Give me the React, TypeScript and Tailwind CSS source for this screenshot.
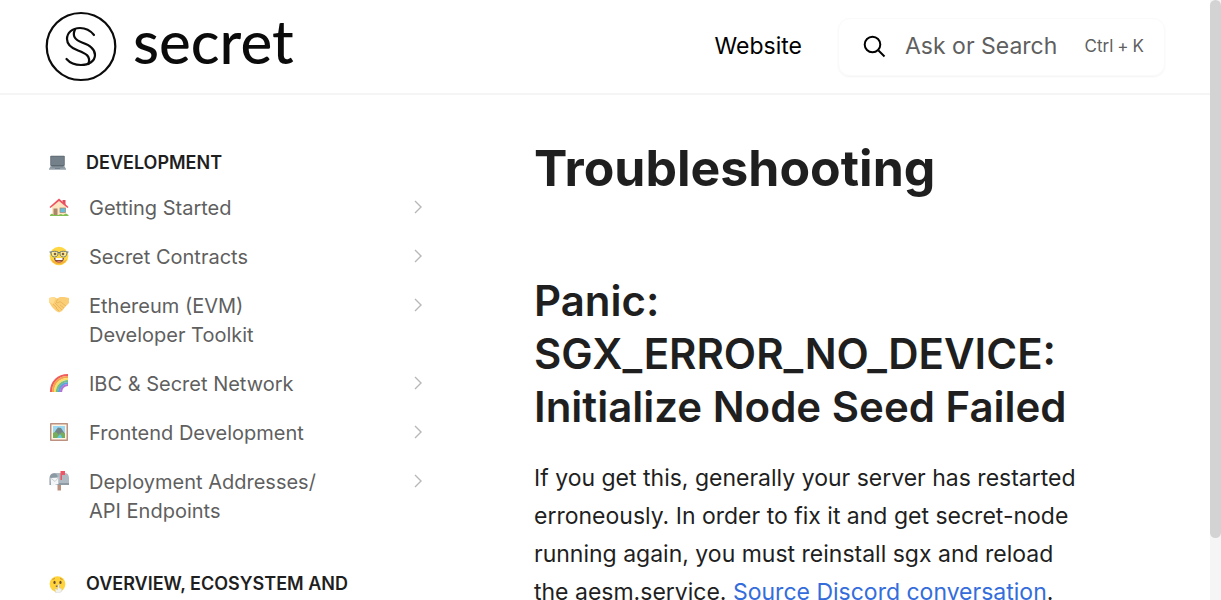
import React, { type ReactNode } from "react";

type Item = { icon: ReactNode; label: string };

function Emoji({ children, small }: { children: ReactNode; small?: boolean }) {
  return (
    <svg viewBox="0 0 20 20" className={small ? "size-[17px] opacity-90" : "size-5 opacity-90"} aria-hidden="true">
      {children}
    </svg>
  );
}

const Laptop = () => (
  <Emoji small>
    <rect x="1.500" y="2" width="17" height="12" rx="1" fill="#4a5760" />
    <rect x="2.500" y="3" width="15" height="10" fill="#66747e" />
    <path d="M2 14H18L20 17.500H0Z" fill="#84919a" />
    <path d="M0 17.500H20V18.800H0Z" fill="#a8b2b9" />
    <path d="M3.500 15H16.500M7 17H13" stroke="#54616b" strokeWidth=".8" />
  </Emoji>
);

const House = () => (
  <Emoji>
    <path d="M13.500 3H16.500V9H13.500Z" fill="#d93a4c" />
    <path d="M3 9L10 3L17 9V18H3Z" fill="#fbe3bd" />
    <path d="M0.500 10L10 1.500L19.500 10L18.500 11L10 4L1.500 11Z" fill="#ee3f51" />
    <rect x="4.500" y="11.500" width="4" height="6.500" fill="#a37a5d" />
    <rect x="11" y="11" width="5.500" height="4.500" fill="#4fb6d8" stroke="#a37a5d" strokeWidth=".7" />
    <path d="M1 18C3 15.500 4 17 5 18H9L12 17L14 18L17 16.500L19.500 18V19H1Z" fill="#75b941" />
  </Emoji>
);

const Nerd = () => (
  <Emoji>
    <circle cx="10" cy="10" r="9.300" fill="#ffd32e" />
    <path d="M2 13C4 20 16 20 18 13C15 17 5 17 2 13Z" fill="#f5a723" />
    <g fill="#ffe98a" stroke="#4c6470" strokeWidth=".9">
      <path d="M2 6C4 5 7 5 9 6C9.500 9 8 11 5.500 11C3 11 2 9 2 6Z" />
      <path d="M18 6C16 5 13 5 11 6C10.500 9 12 11 14.500 11C17 11 18 9 18 6Z" />
    </g>
    <path d="M.5 6H2M18 6H19.500M9 6.500H11" stroke="#4c6470" strokeWidth="1.200" />
    <circle cx="6" cy="8" r="1.300" fill="#704c25" />
    <circle cx="14" cy="8" r="1.300" fill="#704c25" />
    <path d="M5 12H15C15 18 5 18 5 12Z" fill="#7a3d26" />
    <path d="M6.500 12H13.500V14H6.500Z" fill="#fff" />
    <path d="M7.500 15.500Q10 14.500 12.500 15.500Q10 17 7.500 15.500Z" fill="#f26a70" />
  </Emoji>
);

const Handshake = () => (
  <Emoji>
    <path d="M0 3L5 2L8 3.500L11 2L15 2L20 3V8L17 11L13 16L10 17.500L7 16L3 12L0 7Z" fill="#fbc865" />
    <path d="M0 3L5 2L6.500 4L4 9L0 7Z" fill="#ffd983" />
    <path d="M9 4L7 7C8 8.500 10 7.500 11 6.500L17 11M4 9L8 13M6 8L10 12M7 13L10 16M11 10L15 13M10 12L13 15" fill="none" stroke="#e0a848" strokeWidth=".7" />
  </Emoji>
);

const Rainbow = () => (
  <Emoji>
    <g fill="none" strokeWidth="2.200">
      <path d="M2 19C2 9 9 2 19 2" stroke="#ed4b4b" />
      <path d="M4 19C4 10 10 4 19 4" stroke="#f59a3d" />
      <path d="M6 19C6 11.500 11.500 6 19 6" stroke="#f7db56" />
      <path d="M8 19C8 13 13 8 19 8" stroke="#68b67a" />
      <path d="M10 19C10 14 14 10 19 10" stroke="#4999d7" />
      <path d="M12 19C12 15 15 12 19 12" stroke="#ab63d0" />
    </g>
  </Emoji>
);

const Frame = () => (
  <Emoji>
    <rect x="1" y="1" width="18" height="18" rx=".8" fill="#b48673" />
    <rect x="2.500" y="2.500" width="15" height="15" fill="#fff4df" />
    <rect x="4" y="4" width="12" height="12" fill="#8dd4f2" />
    <path d="M4 13L7 8L9 5.500L12 6L16 12V16H4Z" fill="#65767a" />
    <path d="M4 11L7 10L10 13L13 10L16 12V16H4Z" fill="#69a64b" />
    <path d="M9 11L11 12L8 16H13L12 13Z" fill="#53c4e7" />
  </Emoji>
);

const Mailbox = () => (
  <Emoji>
    <path d="M8.500 14H12V19.500H8.500Z" fill="#b68672" />
    <path d="M4 2H16C19 2 20 5 20 7V14H9V6Z" fill="#a7b3bd" />
    <path d="M.5 14V7C.5 .5 9 .5 9 7V14Z" fill="#7f8e99" />
    <path d="M9 7V14H20V12H10V7Z" fill="#82909b" />
    <path d="M1.500 7L9.500 6.500V13L2 15Z" fill="#f4f6f7" />
    <path d="M1.500 7L6 10.500L9.500 6.500" fill="none" stroke="#b6c0c7" strokeWidth=".8" />
    <path d="M11.500 0H16V4H13V9H11.500Z" fill="#ee4354" />
  </Emoji>
);

const Shush = () => (
  <Emoji small>
    <circle cx="10" cy="9.500" r="9.300" fill="#ffcf24" />
    <path d="M4 4L7 3M13 3L16 4" stroke="#b77b20" strokeWidth="1" />
    <ellipse cx="6.500" cy="7.500" rx="1.300" ry="1.800" fill="#5b3b1e" />
    <ellipse cx="13.500" cy="7.500" rx="1.300" ry="1.800" fill="#5b3b1e" />
    <path d="M8 12H12" stroke="#704222" strokeWidth="1.500" />
    <path d="M10.500 10H12V14L15 15V18L12 20H8L7 15L10 16Z" fill="#f1f1ee" stroke="#c4c4bf" strokeWidth=".5" />
  </Emoji>
);

const items: Item[] = [
  { icon: <House />, label: "Getting Started" },
  { icon: <Nerd />, label: "Secret Contracts" },
  { icon: <Handshake />, label: "Ethereum (EVM) Developer Toolkit" },
  { icon: <Rainbow />, label: "IBC & Secret Network" },
  { icon: <Frame />, label: "Frontend Development" },
  { icon: <Mailbox />, label: "Deployment Addresses/\u200bAPI Endpoints" },
];

function Logo() {
  return (
    <a href="#home" className="flex items-center gap-4 text-[#0b0b0b]" aria-label="secret">
      <svg viewBox="0 0 72 72" className="size-[72px]" fill="none" stroke="currentColor" strokeWidth="2.200" strokeLinecap="round">
        <ellipse cx="36" cy="35.500" rx="34.300" ry="33.500" />
        <path d="M49 24C45 19 41 17 35 17C27 17 22 22 22 28C22 34 26 37 33 39.500C41 42.500 46 45 43.500 53" />
        <path d="M30 18.500C27 25 30 29 37 31.500C46 34.500 50 38 50 44C50 50 44 54 36 54C30 54 25 52 21.500 48" />
      </svg>
      <span className="pb-3 font-[Lato,sans-serif] text-[60px] leading-[60px] font-medium">secret</span>
    </a>
  );
}

function Chevron() {
  return (
    <svg viewBox="0 0 16 16" className="mt-[5px] mr-px size-4 shrink-0 text-[#b8b8b8]" fill="none" stroke="currentColor" strokeWidth="1.400">
      <path d="M5 2L11 8L5 14" />
    </svg>
  );
}

export default function App() {
  return (
    <div className="flex h-screen bg-white font-[Inter,sans-serif] text-[#1f1f1f]">
      <div className="min-w-0 flex-1 overflow-hidden">
        <header className="flex h-[95px] items-center justify-between border-b-2 border-[#f5f5f5] px-[45px]">
          <Logo />
          <div className="flex items-center gap-9">
            <a href="#website" className="text-[23px] text-black">Website</a>
            <button className="flex h-[58px] w-[327px] items-center rounded-xl border border-[#fafafa] pr-5 pl-6 text-[#5f5f5f] shadow-xs">
              <svg viewBox="0 0 24 24" className="size-6 text-black" fill="none" stroke="currentColor" strokeWidth="2">
                <circle cx="9.500" cy="9.500" r="7.800" />
                <path d="M15.500 15.500L21.500 21.500" />
              </svg>
              <span className="ml-[18px] text-[23px]">Ask or Search</span>
              <span className="ml-auto flex gap-1 text-[17px]"><span>Ctrl</span><span>+</span><span>K</span></span>
            </button>
          </div>
        </header>
        <div className="flex">
          <nav className="w-[489px] shrink-0 pt-[52px] pr-[62px] pl-12">
            <h2 className="flex h-[30px] items-center text-[18px] font-semibold">
              <span className="w-[38px] pl-px"><Laptop /></span>DEVELOPMENT
            </h2>
            <ul className="mt-[7px]">
              {items.map((it) => (
                <li key={it.label}>
                  <a href="#page" className="flex items-start py-[10px] text-[20px] leading-[29px] text-[#5f5f5f]">
                    <span className="w-[41px] shrink-0 pt-[3px] pl-px">{it.icon}</span>
                    <span className="w-[250px]">{it.label}</span>
                    <span className="ml-auto"><Chevron /></span>
                  </a>
                </li>
              ))}
            </ul>
            <h2 className="mt-[33px] flex items-start text-[18px] leading-[30px] font-semibold">
              <span className="w-[38px] shrink-0 pt-[7px] pl-px"><Shush /></span>
              <span>OVERVIEW, ECOSYSTEM AND</span>
            </h2>
          </nav>
          <main className="min-w-0 flex-1 pt-[41px] pr-[120px] pl-[45px]">
            <h1 className="text-[50px] leading-[65px] font-bold">Troubleshooting</h1>
            <h2 className="mt-[73px] text-[42px] leading-[53px] font-semibold">
              Panic: SGX_ERROR_NO_DEVICE: Initialize Node Seed Failed
            </h2>
            <p className="mt-[26px] text-[23px] leading-[38px]">
              If you get this, generally your server has restarted erroneously. In order to fix it and get secret-node running again, you must reinstall sgx and reload the aesm.service.{" "}
              <a href="#source" className="text-[#346ddb]">Source Discord conversation</a>.
            </p>
          </main>
        </div>
      </div>
      <div className="w-[11px] shrink-0 bg-[#f5f5f5]" aria-hidden="true">
        <div className="h-[538px] rounded-full bg-[#d3d3d3]" />
      </div>
    </div>
  );
}
